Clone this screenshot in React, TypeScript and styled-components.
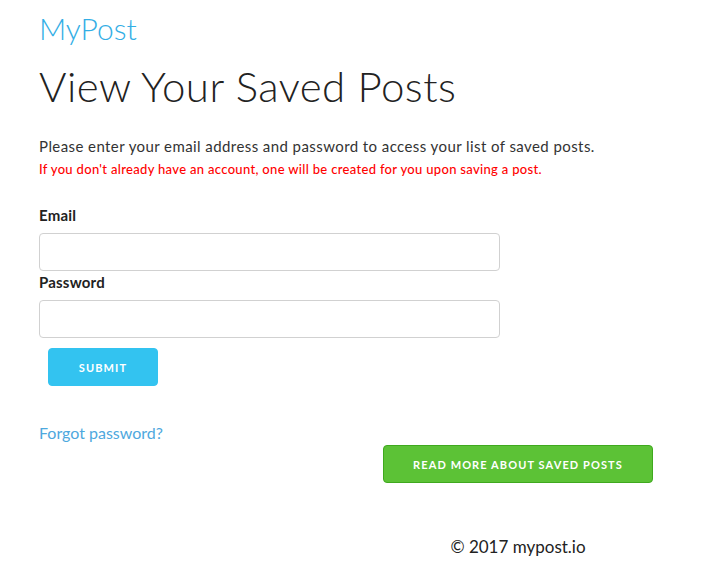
import React from "react";
import styled, { createGlobalStyle } from "styled-components";

const Global = createGlobalStyle`
  html, body { margin: 0; padding: 0; background: #fff; }
  body {
    font-family: Lato, "Open Sans", "Liberation Sans", sans-serif;
    color: #222;
  }
  * { box-sizing: border-box; }
`;

const Page = styled.div`
  display: flex;
  flex-direction: column;
  width: 614px;
  padding: 8px 0 20px 0;
  margin-left: 39px;
`;

const Logo = styled.a`
  font-size: 30px;
  line-height: 40px;
  font-weight: 300;
  color: #33aee5;
  text-decoration: none;
`;

const Title = styled.h1`
  margin: 13px 0 0 0;
  font-size: 42px;
  line-height: 50px;
  font-weight: 300;
  letter-spacing: 0.45px;
  color: #222;
`;

const Lead = styled.p`
  margin: 24px 0 0 0;
  font-size: 15px;
  line-height: 22px;
  letter-spacing: 0.42px;
  color: #333;
`;

const Warning = styled.p`
  margin: 1px 0 0 0;
  font-size: 13px;
  line-height: 22px;
  font-weight: 500;
  letter-spacing: 0.32px;
  color: #ff0000;
`;

const Form = styled.form`
  display: flex;
  flex-direction: column;
  margin-top: 24px;
`;

const Label = styled.label`
  display: block;
  font-size: 15px;
  line-height: 22px;
  font-weight: 700;
  letter-spacing: 0.2px;
  color: #222;
`;

const Input = styled.input`
  display: block;
  width: 461px;
  height: 38px;
  margin-top: 7px;
  padding: 6px 10px;
  border: 1px solid #d1d1d1;
  border-radius: 4px;
  background: #fff;
  font: inherit;
  outline: none;
`;

const Button = styled.button<{ $variant: "blue" | "green" }>`
  display: inline-flex;
  align-items: center;
  justify-content: center;
  height: 38px;
  padding: 0 16px;
  border-radius: 4px;
  border: 1px solid ${(p) => (p.$variant === "blue" ? "#33c3f0" : "#3fa91e")};
  background: ${(p) => (p.$variant === "blue" ? "#33c3f0" : "#5cc236")};
  color: #fff;
  font-family: inherit;
  font-size: 11px;
  font-weight: 700;
  letter-spacing: 1.1px;
  text-transform: uppercase;
  white-space: nowrap;
  cursor: pointer;
`;

const SubmitButton = styled(Button)`
  align-self: flex-start;
  width: 110px;
  margin: 10px 0 0 9px;
`;

const ForgotLink = styled.a`
  display: block;
  margin-top: 36px;
  font-size: 16px;
  line-height: 22px;
  color: #4ea8de;
  text-decoration: none;
`;

const RightColumn = styled.div`
  align-self: flex-end;
  width: 270px;
  display: flex;
  flex-direction: column;
  align-items: center;
  margin-top: 1px;
`;

const MoreButton = styled(Button)`
  width: 270px;
`;

const Footer = styled.footer`
  margin-top: 52px;
  font-size: 17px;
  line-height: 24px;
  color: #222;
`;

export default function App() {
  return (
    <>
      <Global />
      <Page>
        <Logo href="#">MyPost</Logo>
        <Title>View Your Saved Posts</Title>
        <Lead>
          Please enter your email address and password to access your list of saved posts.
        </Lead>
        <Warning>
          If you don't already have an account, one will be created for you upon saving a post.
        </Warning>
        <Form onSubmit={(e) => e.preventDefault()}>
          <Label htmlFor="email">Email</Label>
          <Input id="email" type="email" />
          <Label htmlFor="password">Password</Label>
          <Input id="password" type="password" />
          <SubmitButton $variant="blue" type="submit">Submit</SubmitButton>
        </Form>
        <ForgotLink href="#">Forgot password?</ForgotLink>
        <RightColumn>
          <MoreButton $variant="green" type="button">Read more about saved posts</MoreButton>
          <Footer>© 2017 mypost.io</Footer>
        </RightColumn>
      </Page>
    </>
  );
}
